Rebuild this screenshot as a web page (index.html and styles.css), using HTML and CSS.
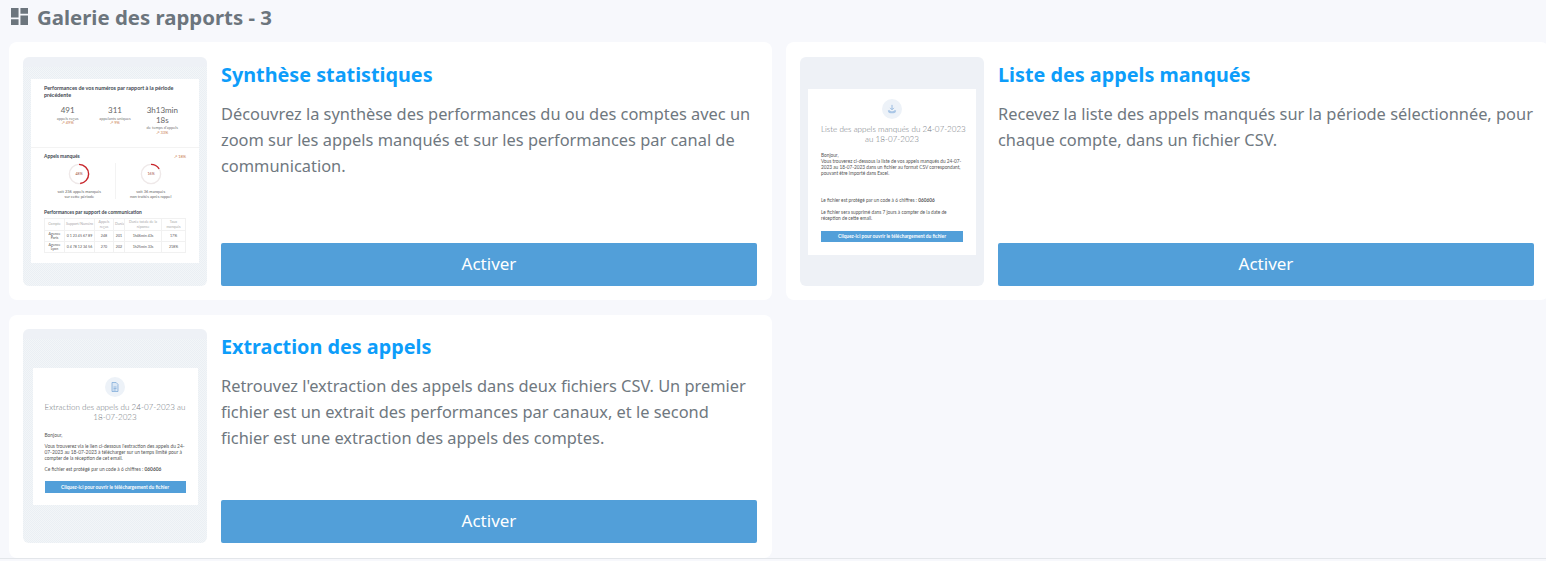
FILE: index.html
```html
<!DOCTYPE html>
<html lang="fr">
<head>
<meta charset="utf-8">
<title>Galerie des rapports</title>
<link rel="stylesheet" href="styles.css">
</head>
<body>
<main class="page">
  <h1 class="page-title">
    <svg class="title-icon" viewBox="0 0 18 18" aria-hidden="true"><path d="M0 0h8v10H0zM10 0h8v6h-8zM10 8h8v10h-8zM0 12h8v6H0z"/></svg>
    Galerie des rapports - 3
  </h1>
  <section class="gallery">
    <article class="card card-tall">
      <div class="thumb thumb-dither">
        <div class="sheet sheet-stats">
          <p class="m-head">Performances de vos numéros par rapport à la période précédente</p>
          <div class="m-kpis">
            <div class="m-kpi"><b>491</b><span>appels reçus</span><i>↗ 49%</i></div>
            <div class="m-kpi"><b>311</b><span>appelants uniques</span><i>↗ 9%</i></div>
            <div class="m-kpi"><b>3h13min<br>18s</b><span>de temps d'appels</span><i>↗ 33%</i></div>
          </div>
          <div class="m-rule"></div>
          <div class="m-row"><p class="m-head m-head-small">Appels manqués</p><i class="m-trend">↗ 18%</i></div>
          <div class="m-rings">
            <div class="m-ring-col">
              <svg class="ring" viewBox="0 0 24 24"><circle class="ring-bg" cx="12" cy="12" r="10.5"/><circle class="ring-fg" cx="12" cy="12" r="10.5" pathLength="100" stroke-dasharray="48 100" transform="rotate(-90 12 12)"/><text x="12" y="13.5">48%</text></svg>
              <span>soit 236 appels manqués<br>sur cette période</span>
            </div>
            <div class="m-ring-col m-ring-right">
              <svg class="ring" viewBox="0 0 24 24"><circle class="ring-bg" cx="12" cy="12" r="10.5"/><circle class="ring-fg" cx="12" cy="12" r="10.5" pathLength="100" stroke-dasharray="16 100" transform="rotate(-90 12 12)"/><text x="12" y="13.5">16%</text></svg>
              <span>soit 36 manqués<br>non traités après rappel</span>
            </div>
          </div>
          <p class="m-head m-head-small m-head-table">Performances par support de communication</p>
          <table class="m-table">
            <tr><th>Compte</th><th>Support/Numéro</th><th>Appels reçus</th><th>Durée</th><th>Durée totale de la réponse</th><th>Taux manqués</th></tr>
            <tr><td>Agence Paris</td><td>0 1 23 45 67 89</td><td>248</td><td>201</td><td>1h46min 43s</td><td>17%</td></tr>
            <tr><td>Agence Lyon</td><td>0 4 78 12 34 56</td><td>270</td><td>202</td><td>1h25min 33s</td><td>218%</td></tr>
          </table>
        </div>
      </div>
      <div class="body">
        <h2>Synthèse statistiques</h2>
        <p class="desc">Découvrez la synthèse des performances du ou des comptes avec un zoom sur les appels manqués et sur les performances par canal de communication.</p>
        <button class="activate" type="button">Activer</button>
      </div>
    </article>

    <article class="card card-tall">
      <div class="thumb">
        <div class="sheet sheet-mail sheet-missed">
          <span class="mail-badge">
            <svg viewBox="0 0 16 16" aria-hidden="true"><path d="M8 2.5v6M5.5 6.5 8 9l2.5-2.5" class="badge-line"/><path d="M2.5 9.5c0 2.5 1.5 4 3.5 4h4c2 0 3.500-1.500 3.500-4H11c-.5 1-1.500 1.500-3 1.500S5.500 10.500 5 9.500z" class="badge-fill"/></svg>
          </span>
          <h3>Liste des appels manqués du 24-07-2023<br>au 18-07-2023</h3>
          <p class="mail-intro">Bonjour,<br>Vous trouverez ci-dessous la liste de vos appels manqués du 24-07-2023 au 18-07-2023 dans un fichier au format CSV correspondant, pouvant être importé dans Excel.</p>
          <p class="mail-code">Le fichier est protégé par un code à 6 chiffres : <b>060606</b></p>
          <p class="mail-note">Le fichier sera supprimé dans 7 jours à compter de la date de réception de cette email.</p>
          <div class="mail-btn">Cliquez-ici pour ouvrir le téléchargement du fichier</div>
        </div>
      </div>
      <div class="body">
        <h2>Liste des appels manqués</h2>
        <p class="desc">Recevez la liste des appels manqués sur la période sélectionnée, pour chaque compte, dans un fichier CSV.</p>
        <button class="activate" type="button">Activer</button>
      </div>
    </article>

    <article class="card card-short">
      <div class="thumb thumb-dither">
        <div class="sheet sheet-mail sheet-extract">
          <span class="mail-badge">
            <svg viewBox="0 0 16 16" aria-hidden="true"><path d="M4 2h5.500L12 4.500V14H4z" class="badge-doc"/><path d="M6 8h4M6 10h4M6 12h3" class="badge-line"/></svg>
          </span>
          <h3>Extraction des appels du 24-07-2023 au<br>18-07-2023</h3>
          <p class="mail-hello">Bonjour,</p>
          <p class="mail-body">Vous trouverez via le lien ci-dessous l'extraction des appels du 24-07-2023 au 18-07-2023 à télécharger sur un temps limité pour à compter de la réception de cet email.</p>
          <p class="mail-body">Ce fichier est protégé par un code à 6 chiffres : <b>060606</b></p>
          <div class="mail-btn">Cliquez-ici pour ouvrir le téléchargement du fichier</div>
        </div>
      </div>
      <div class="body">
        <h2>Extraction des appels</h2>
        <p class="desc">Retrouvez l'extraction des appels dans deux fichiers CSV. Un premier fichier est un extrait des performances par canaux, et le second fichier est une extraction des appels des comptes.</p>
        <button class="activate" type="button">Activer</button>
      </div>
    </article>
  </section>
</main>
</body>
</html>
```

FILE: styles.css
```css
* { box-sizing: border-box; }
html, body { height: 100%; }
body {
  margin: 0;
  overflow: hidden;
  background: #f7f8fc;
  font-family: "Noto Sans", "Open Sans", sans-serif;
  color: #6c757d;
}
.page {
  width: 1546px;
  height: 559px;
  overflow: hidden;
  border-bottom: 1px solid #e3e6ea;
  padding-left: 9px;
}
.page-title {
  display: flex;
  align-items: center;
  gap: 9px;
  margin: 0;
  height: 42px;
  padding: 0 0 9px 2px;
  font-size: 20.400px;
  font-weight: 700;
  color: #6c757d;
  white-space: nowrap;
}
.title-icon { width: 17px; height: 17px; fill: #6c757d; flex: none; }
.gallery {
  display: grid;
  grid-template-columns: 763px 763px;
  column-gap: 14px;
  row-gap: 15px;
  align-items: start;
}
.card {
  display: flex;
  gap: 14px;
  background: #fff;
  border-radius: 8px;
  padding: 15px 15px 14px 14px;
}
.card-tall { height: 258px; }
.card-short { height: 243px; padding-top: 14px; padding-bottom: 15px; }
.thumb {
  flex: none;
  width: 184px;
  display: flex;
  align-items: center;
  justify-content: center;
  background-color: #eef1f6;
  border-radius: 6px;
}
.thumb-dither {
  background:
    linear-gradient(#eef1f6, #eef1f6) top / 100% 10px no-repeat,
    conic-gradient(#f3f6f8 25%, #eaeff4 0 50%, #f3f6f8 0 75%, #eaeff4 0) 0 0 / 2px 2px;
}
.sheet { background: #fff; color: #555; overflow: hidden; font-family: Lato, "Noto Sans", sans-serif; }
.sheet-stats { width: 168px; height: 184px; margin-bottom: 1px; padding: 6px 13px 0; }
.m-head { margin: 0; font-size: 5.400px; line-height: 6.500px; font-weight: 700; color: #3d4650; }
.m-head-small { font-size: 4.900px; }
.m-kpis { display: flex; margin-top: 8px; height: 35px; }
.m-kpi { flex: 1; display: flex; flex-direction: column; align-items: center; text-align: center; font-size: 4px; line-height: 4.500px; color: #777; }
.m-kpi b { font-size: 8px; line-height: 9.500px; font-weight: 400; color: #666; margin-bottom: 1px; }
.m-kpi i, .m-trend { font-style: normal; color: #c8794a; font-size: 4px; }
.m-rule { height: 1px; margin: 6px -13px 5px; background: #f3f3f3; }
.m-row { display: flex; justify-content: space-between; align-items: center; }
.m-rings { display: flex; margin-top: 3px; height: 36px; }
.m-ring-col { flex: 1; display: flex; flex-direction: column; align-items: center; text-align: center; font-size: 4px; line-height: 5px; color: #666; }
.m-ring-right { border-left: 1px solid #f3f3f3; }
.ring { width: 22px; height: 22px; flex: none; margin-bottom: 4px; }
.ring-bg { fill: none; stroke: #efe9e9; stroke-width: 1.500; }
.ring-fg { fill: none; stroke: #c9242a; stroke-width: 1.500; }
.ring text { font-size: 4px; text-anchor: middle; fill: #a5533f; }
.m-head-table { margin-top: 10px; }
.m-table { width: 100%; margin-top: 3px; border-collapse: collapse; table-layout: fixed; font-size: 3.600px; line-height: 4.200px; text-align: center; color: #555; }
.m-table th { font-weight: 400; color: #aaa; height: 12px; }
.m-table td { height: 11px; }
.m-table th, .m-table td { border: 1px solid #f1f1f1; padding: 0 1px; overflow: hidden; }
.m-table th:nth-child(1) { width: 20px; }
.m-table th:nth-child(2) { width: 30px; }
.m-table th:nth-child(3) { width: 19px; }
.m-table th:nth-child(4) { width: 11px; }
.m-table th:nth-child(5) { width: 37px; }
.sheet-mail p { margin: 0; font-size: 4.750px; line-height: 6px; color: #555; }
.sheet-mail h3 { margin: 0; font-size: 8.050px; line-height: 10px; font-weight: 300; text-align: center; color: #6f757c; white-space: nowrap; }
.mail-badge { display: flex; align-items: center; justify-content: center; width: 20px; height: 20px; margin: 0 auto; border-radius: 50%; background: #edf2f8; }
.mail-badge svg { width: 12px; height: 12px; }
.badge-line { fill: none; stroke: #7ea9d8; stroke-width: 1; }
.badge-fill { fill: #a9c6e6; }
.badge-doc { fill: #dbe7f4; stroke: #7ea9d8; stroke-width: 1; }
.mail-btn { height: 11px; background: #529fd9; color: #fff; font-size: 4.800px; line-height: 11px; font-weight: 700; text-align: center; }
.sheet-missed { width: 168px; height: 166px; padding: 10px 13px 0; }
.sheet-missed .mail-badge { margin-bottom: 5px; }
.sheet-missed .mail-intro { margin-top: 8px; }
.sheet-missed .mail-code { margin-top: 21px; }
.sheet-missed .mail-note { margin-top: 6px; }
.sheet-missed .mail-btn { margin-top: 10px; }
.sheet-extract { width: 165px; height: 137px; padding: 9px 12px 0; }
.sheet-extract .mail-badge { margin-bottom: 5px; }
.sheet-extract p { font-size: 4.850px; }
.sheet-extract .mail-hello { margin-top: 10px; }
.sheet-extract .mail-body { margin-top: 5px; }
.sheet-extract .mail-btn { height: 12px; margin-top: 9px; line-height: 12px; }
.body { flex: 1; min-width: 0; display: flex; flex-direction: column; }
.body h2 { margin: 4px 0 0; font-size: 19.800px; line-height: 28px; font-weight: 700; color: #0d9dfa; }
.desc { margin: 12px 0 0; font-size: 16.400px; line-height: 26px; color: #6f7880; flex: 1; }
.activate {
  flex: none;
  height: 43px;
  border: 0;
  border-radius: 2px;
  padding-bottom: 3px;
  background: #529fd9;
  color: #fff;
  font: 400 17px "Noto Sans", "Open Sans", sans-serif;
}
```
